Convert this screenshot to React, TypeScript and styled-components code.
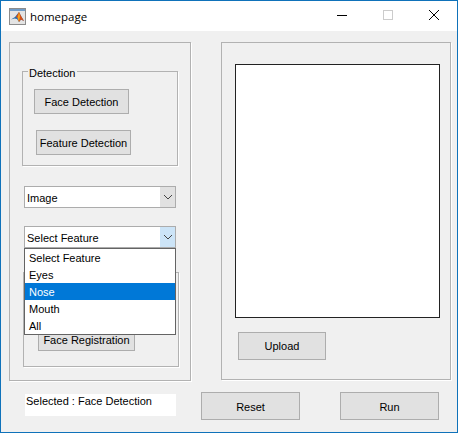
import styled, { createGlobalStyle } from "styled-components";

const GlobalStyle = createGlobalStyle`
  html, body {
    margin: 0;
    padding: 0;
    background: #f0f0f0;
  }
  * {
    box-sizing: border-box;
  }
`;

const Window = styled.div`
  width: 458px;
  height: 433px;
  display: flex;
  flex-direction: column;
  border: 1px solid #0f72ba;
  background: #f0f0f0;
  font-family: "Liberation Sans", Arial, sans-serif;
  font-size: 11px;
  color: #000;
`;

const TitleBar = styled.div`
  height: 30px;
  flex: none;
  display: flex;
  align-items: center;
  background: #fff;
  padding-left: 8px;
`;

const Title = styled.span`
  margin-left: 4px;
  font-family: "Open Sans", "Noto Sans", sans-serif;
  font-size: 11.5px;
  flex: 1;
`;

const WinButton = styled.div`
  width: 46px;
  height: 30px;
  display: flex;
  justify-content: center;
  padding-top: 9px;
`;

const Main = styled.div`
  display: flex;
  gap: 30px;
  padding: 11px 0 0 8px;
`;

const Panel = styled.div<{ $w: number; $h: number }>`
  width: ${(p) => p.$w}px;
  height: ${(p) => p.$h}px;
  border: 1px solid #b2b2b2;
  box-shadow: 1px 1px 0 #fff;
`;

const LeftPanel = styled(Panel)`
  padding: 28px 0 0 12px;
`;

const RightPanel = styled(Panel)`
  padding: 21px 0 0 13px;
`;

const Group = styled.div<{ $mt?: number; $ml?: number }>`
  position: relative;
  width: 156px;
  height: 95px;
  margin-top: ${(p) => p.$mt ?? 0}px;
  margin-left: ${(p) => p.$ml ?? 0}px;
  border: 1px solid #b2b2b2;
  box-shadow: 1px 1px 0 #fff;
`;

const Legend = styled.span`
  position: absolute;
  top: -5px;
  left: 5px;
  padding: 0 2px 0 1px;
  line-height: 12px;
  background: #f0f0f0;
`;

const DetectionButtons = styled.div`
  display: flex;
  flex-direction: column;
  align-items: flex-start;
  gap: 16px;
  padding: 17px 0 0 11px;
`;

const Button = styled.button<{ $w: number; $h?: number; $ml?: number; $low?: boolean }>`
  width: ${(p) => p.$w}px;
  height: ${(p) => p.$h ?? 25}px;
  margin: 0 0 0 ${(p) => p.$ml ?? 0}px;
  padding: ${(p) => (p.$low ? "2px 0 0" : "0")};
  border: 1px solid #adadad;
  background: #e1e1e1;
  font: inherit;
  color: #000;
  flex: none;
`;

const SelectBox = styled.div<{ $mt: number; $ml?: number }>`
  position: relative;
  width: 152px;
  height: 22px;
  margin-top: ${(p) => p.$mt}px;
  margin-left: ${(p) => p.$ml ?? 2}px;
  display: flex;
  border: 1px solid #acacac;
  background: #fff;
`;

const SelectText = styled.span`
  flex: 1;
  padding: 1px 0 0 2px;
  line-height: 20px;
`;

const Arrow = styled.span<{ $open?: boolean }>`
  width: 15px;
  display: flex;
  align-items: center;
  justify-content: center;
  background: ${(p) => (p.$open ? "#cce4f7" : "#e1e1e1")};
`;

const DropList = styled.ul`
  position: absolute;
  top: 21px;
  left: -1px;
  width: 152px;
  margin: 0;
  padding: 0;
  list-style: none;
  border: 1px solid #646464;
  background: #fff;
  z-index: 2;
`;

const DropItem = styled.li<{ $active?: boolean }>`
  height: 17px;
  line-height: 19px;
  padding-left: 4px;
  background: ${(p) => (p.$active ? "#0078d7" : "#fff")};
  color: ${(p) => (p.$active ? "#fff" : "#000")};
`;

const RegistrationWrap = styled.div`
  display: flex;
  height: 100%;
  align-items: flex-end;
  padding: 0 0 15px 14px;
`;

const Axes = styled.div`
  width: 205px;
  height: 254px;
  border: 1px solid #222;
  background: #fff;
`;

const UploadWrap = styled.div`
  margin: 14px 0 0 3px;
`;

const Footer = styled.div`
  display: flex;
  align-items: flex-start;
  padding: 11px 0 0 24px;
`;

const Status = styled.div`
  width: 151px;
  height: 22px;
  margin-top: 2px;
  padding-left: 1px;
  line-height: 14px;
  background: #fff;
`;

function MatlabIcon() {
  return (
    <svg width="17" height="17" viewBox="0 0 17 17">
      <rect x="0.5" y="0.5" width="16" height="16" fill="#e4e4e4" stroke="#8c8c8c" />
      <rect x="1" y="1" width="15" height="2" fill="#6f9cc8" />
      <path d="M2 11.5 L6 9 L8 6.5 L10 4 L12 8 L15 13 L12 11.5 L10 14 L8 11 L5.5 10.5 Z" fill="#2468ac" />
      <path d="M7 9 L10 4 L12 8 L15 13 L12 11.5 L10 14 L9 10 Z" fill="#d94f14" />
      <path d="M10 4 L11 8 L10 14 L8.5 10 Z" fill="#f4a21e" />
    </svg>
  );
}

function Chevron() {
  return (
    <svg width="10" height="6" viewBox="0 0 10 6">
      <path d="M1 1 L5 5 L9 1" fill="none" stroke="#444" strokeWidth="1" />
    </svg>
  );
}

const features = ["Select Feature", "Eyes", "Nose", "Mouth", "All"];

export default function App() {
  return (
    <Window>
      <GlobalStyle />
      <TitleBar>
        <MatlabIcon />
        <Title>homepage</Title>
        <WinButton>
          <svg width="10" height="10" viewBox="0 0 10 10">
            <path d="M0 5.5 H10" stroke="#000" strokeWidth="1" />
          </svg>
        </WinButton>
        <WinButton>
          <svg width="10" height="10" viewBox="0 0 10 10">
            <rect x="0.5" y="0.5" width="9" height="9" fill="none" stroke="#cccccc" />
          </svg>
        </WinButton>
        <WinButton>
          <svg width="10" height="10" viewBox="0 0 10 10">
            <path d="M0 0 L10 10 M10 0 L0 10" stroke="#000" strokeWidth="1" />
          </svg>
        </WinButton>
      </TitleBar>
      <Main>
        <LeftPanel $w={182} $h={339}>
          <Group>
            <Legend>Detection</Legend>
            <DetectionButtons>
              <Button $w={95}>Face Detection</Button>
              <Button $w={95} $ml={2}>Feature Detection</Button>
            </DetectionButtons>
          </Group>
          <SelectBox $mt={20}>
            <SelectText>Image</SelectText>
            <Arrow><Chevron /></Arrow>
          </SelectBox>
          <SelectBox $mt={18}>
            <SelectText>Select Feature</SelectText>
            <Arrow $open><Chevron /></Arrow>
            <DropList>
              {features.map((f) => (
                <DropItem key={f} $active={f === "Nose"}>{f}</DropItem>
              ))}
            </DropList>
          </SelectBox>
          <Group $mt={24} $ml={1}>
            <RegistrationWrap>
              <Button $w={97} $h={23}>Face Registration</Button>
            </RegistrationWrap>
          </Group>
        </LeftPanel>
        <RightPanel $w={230} $h={338}>
          <Axes />
          <UploadWrap>
            <Button $w={88} $h={28}>Upload</Button>
          </UploadWrap>
        </RightPanel>
      </Main>
      <Footer>
        <Status>Selected : Face Detection</Status>
        <Button $w={99} $h={28} $ml={25} $low>Reset</Button>
        <Button $w={99} $h={28} $ml={40} $low>Run</Button>
      </Footer>
    </Window>
  );
}
